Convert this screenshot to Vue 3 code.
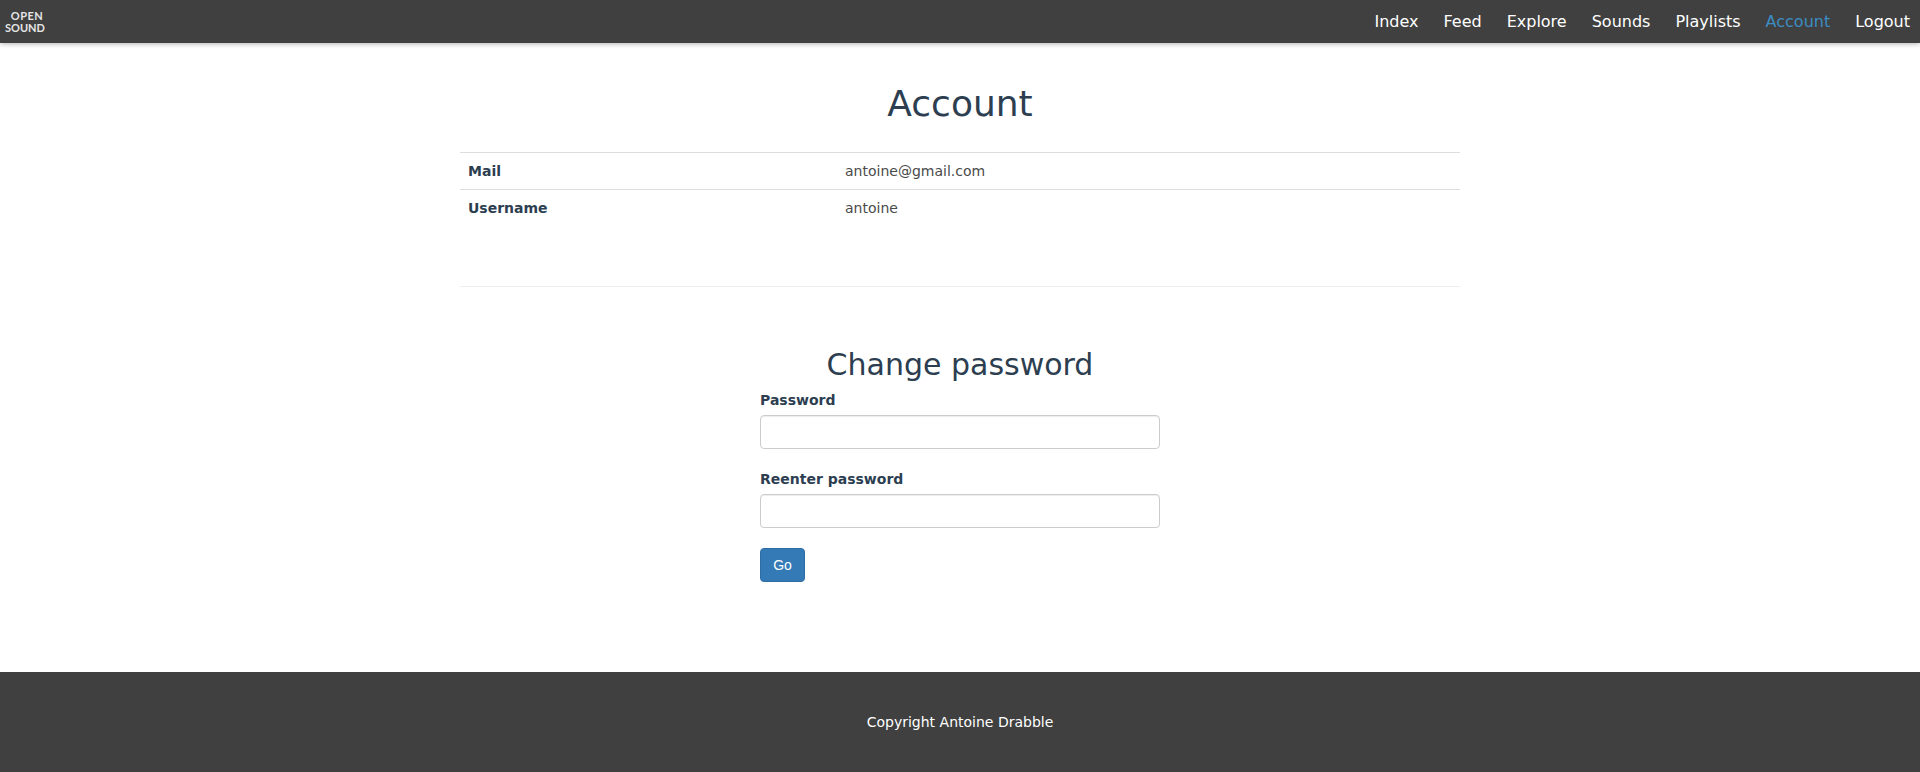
<script setup>
const links = ['Index', 'Feed', 'Explore', 'Sounds', 'Playlists', 'Account', 'Logout']
</script>

<template>
  <div class="page">
    <header class="nav">
      <div class="logo"><span class="l1">OPEN</span><span class="l2">SOUND</span></div>
      <nav class="links">
        <a v-for="l in links" :key="l" :class="{ active: l === 'Account' }">{{ l }}</a>
      </nav>
    </header>
    <main class="main">
      <h1>Account</h1>
      <table>
        <tbody>
          <tr><th>Mail</th><td>antoine@gmail.com</td></tr>
          <tr><th>Username</th><td>antoine</td></tr>
        </tbody>
      </table>
      <hr />
      <form class="form" @submit.prevent>
        <h2>Change password</h2>
        <label>Password</label>
        <input type="password" />
        <label class="second">Reenter password</label>
        <input type="password" />
        <button type="submit">Go</button>
      </form>
    </main>
    <footer class="foot">Copyright Antoine Drabble</footer>
  </div>
</template>

<style>
html, body { margin: 0; background: #fff; }
</style>

<style scoped>
.page {
  height: 772px;
  display: flex;
  flex-direction: column;
  font-family: "DejaVu Sans", Verdana, sans-serif;
  font-size: 14px;
  line-height: 20px;
  color: #2c3e50;
  overflow: hidden;
}
.nav {
  height: 43px;
  flex: none;
  background: #404040;
  display: flex;
  justify-content: space-between;
  align-items: center;
  box-shadow: 0 1px 5px rgba(0, 0, 0, 0.3);
  position: relative;
}
.logo {
  width: 38px;
  margin: 0 0 0 6px;
  display: flex;
  flex-direction: column;
  align-items: center;
  color: #e6e6e6;
  font-family: Lato, sans-serif;
  font-size: 11px;
  font-weight: 700;
  line-height: 12px;
}
.l1 { margin-left: 4px; letter-spacing: 0.5px; }
.links { display: flex; gap: 25px; padding-right: 10px; }
.links a { color: #fff; font-size: 16px; line-height: 22px; }
.links a.active { color: #3b8dc4; }
.main { flex: 1; width: 1000px; margin: 0 auto; }
h1 {
  margin: 41px 0 28px;
  font-size: 36px;
  line-height: 40px;
  font-weight: 400;
  text-align: center;
}
table { width: 100%; border-collapse: collapse; }
th, td {
  padding: 8px;
  border-top: 1px solid #ddd;
  text-align: left;
  font-size: 14px;
  line-height: 20px;
}
th { width: 361px; font-weight: 700; }
td { color: #4a4a4a; }
hr { margin: 60px 0 0; border: 0; border-top: 1px solid #eee; }
.form { width: 400px; margin: 61px auto 0; display: flex; flex-direction: column; align-items: flex-start; }
h2 {
  width: 100%;
  margin: 0 0 9px;
  font-size: 30px;
  line-height: 33px;
  font-weight: 400;
  text-align: center;
}
label { font-size: 14px; font-weight: 700; line-height: 20px; margin-bottom: 5px; }
label.second { margin-top: 20px; }
input {
  box-sizing: border-box;
  width: 100%;
  height: 34px;
  border: 1px solid #ccc;
  border-radius: 4px;
  background: #fff;
  box-shadow: inset 0 1px 1px rgba(0, 0, 0, 0.075);
}
button {
  margin-top: 20px;
  width: 45px;
  height: 34px;
  background: #337ab7;
  border: 1px solid #2e6da4;
  border-radius: 4px;
  color: #fff;
  font-family: "Liberation Sans", Arial, sans-serif;
  font-size: 14px;
  padding: 0;
}
.foot {
  height: 100px;
  flex: none;
  background: #404040;
  color: #fff;
  display: flex;
  align-items: center;
  justify-content: center;
  font-size: 14px;
}
</style>
